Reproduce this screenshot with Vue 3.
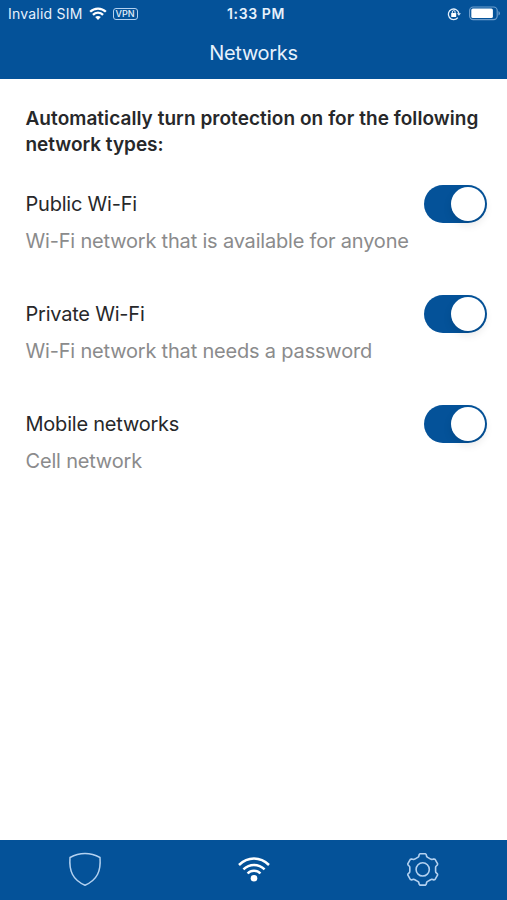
<script setup>
import { ref } from 'vue'

const networks = ref([
  { id: 'public', title: 'Public Wi-Fi', detail: 'Wi-Fi network that is available for anyone', on: true },
  { id: 'private', title: 'Private Wi-Fi', detail: 'Wi-Fi network that needs a password', on: true },
  { id: 'mobile', title: 'Mobile networks', detail: 'Cell network', on: true },
])

// Outline of a six-toothed cog: each tooth is given as (sideways, outward) offsets from the centre.
function cogPath(cx, cy) {
  const tooth = [[-5, 12], [-4, 12.8], [-3.5, 14.9], [-2.7, 15.7], [2.7, 15.7], [3.5, 14.9], [4, 12.8], [5, 12]]
  const points = []
  for (let i = 0; i < 6; i++) {
    const a = (i * Math.PI) / 3
    for (const [u, r] of tooth) {
      const x = cx + r * Math.sin(a) + u * Math.cos(a)
      const y = cy - r * Math.cos(a) + u * Math.sin(a)
      points.push(`${x.toFixed(2)} ${y.toFixed(2)}`)
    }
  }
  return `M${points.join('L')}Z`
}
const cog = cogPath(17.7, 17.4)
</script>

<template>
  <div class="screen">
    <header class="header">
      <div class="status">
        <div class="carrier">
          <span class="sim">Invalid SIM</span>
          <svg class="wifi-small" width="18" height="14" viewBox="0 0 32 25" fill="none" stroke="#fff" stroke-width="4.2">
            <path d="M2 8.5a20 20 0 0 1 28 0" />
            <path d="M7 14a12.5 12.5 0 0 1 18 0" />
            <path d="M11 18a7 7 0 0 1 10 0L16 23z" fill="#fff" stroke="none" />
          </svg>
          <span class="vpn">VPN</span>
        </div>
        <div class="clock">1:33 PM</div>
        <div class="indicators">
          <svg width="14" height="14" viewBox="0 0 14 14" fill="none" stroke="#e3effb">
            <path d="M10.8 10.6A5.3 5.3 0 1 1 11.9 6.6" stroke-width="1.3" />
            <path d="M9.9 6.2h4l-2 2.6z" fill="#e3effb" stroke="none" />
            <rect x="4.2" y="5.9" width="5" height="4" rx=".5" fill="#fff" stroke="none" />
            <path d="M5.3 6.5V5a1.4 1.4 0 0 1 2.8 0v1.5" stroke-width="1" />
          </svg>
          <svg width="32" height="15" viewBox="0 0 32 15">
            <rect x="0.6" y="1" width="27.6" height="12.6" rx="3.6" fill="none" stroke="#6f9fce" stroke-width="1.1" />
            <rect x="2.3" y="2.5" width="21.6" height="9.6" rx="1.6" fill="#fff" />
            <path d="M29.5 5q1.4.7 1.4 2.3t-1.4 2.3z" fill="#6f9fce" />
          </svg>
        </div>
      </div>
      <h1 class="title">Networks</h1>
    </header>

    <main class="content">
      <h2 class="intro"><span class="intro-first">Automatically turn protection on for the following</span><br><span class="intro-last">network types:</span></h2>
      <section v-for="network in networks" :key="network.id" class="network">
        <div class="row">
          <span class="name">{{ network.title }}</span>
          <button
            class="switch"
            :class="{ on: network.on }"
            role="switch"
            :aria-checked="network.on"
            @click="network.on = !network.on"
          >
            <span class="knob"></span>
          </button>
        </div>
        <p class="detail">{{ network.detail }}</p>
      </section>
    </main>

    <nav class="tabs">
      <div class="tab">
        <svg width="36" height="36" viewBox="0 0 36 36" fill="none" stroke="#b3d1f0" stroke-width="1.5" stroke-linejoin="round">
          <path d="M18 1.6C23.2 1.6 28.2 2.9 33 5.5C34 18.7 30.6 27.7 18 33.2C5.4 27.7 2 18.7 3 5.5C7.8 2.9 12.8 1.6 18 1.6Z" />
        </svg>
      </div>
      <div class="tab">
        <svg width="36" height="36" viewBox="0 0 36 36" fill="none" stroke="#fff" stroke-width="2.5">
          <path d="M3 13Q9.6 6.6 18 6.6T33 13" />
          <path d="M7.4 17.4Q12 13 18 13T28.6 17.4" />
          <path d="M11.6 21.5Q14.2 18.8 18 18.8T24.4 21.5" />
          <circle cx="18" cy="26.2" r="3.3" fill="#fff" stroke="none" />
        </svg>
      </div>
      <div class="tab">
        <svg width="36" height="36" viewBox="0 0 36 36" fill="none" stroke="#b3d1f0" stroke-width="1.6" stroke-linejoin="round">
          <path :d="cog" />
          <circle cx="17.7" cy="17.4" r="6.6" />
        </svg>
      </div>
    </nav>
  </div>
</template>

<style>
body {
  margin: 0;
  background: #fff;
}
</style>

<style scoped>
.screen {
  display: flex;
  flex-direction: column;
  width: 507px;
  height: 900px;
  background: #fff;
  color: #27282a;
  font-family: Inter, "Liberation Sans", sans-serif;
  overflow: hidden;
}

.header {
  box-sizing: border-box;
  height: 79px;
  flex: none;
  background: #045299;
  color: #e6f1fc;
}

.status {
  display: grid;
  grid-template-columns: 1fr auto 1fr;
  align-items: center;
  height: 27px;
  padding: 0 6px 0 8px;
}

.carrier {
  display: flex;
  align-items: center;
}

.sim {
  font-size: 14px;
  line-height: 27px;
  letter-spacing: 0.22px;
  white-space: nowrap;
}

.wifi-small {
  margin-left: 6px;
}

.vpn {
  box-sizing: border-box;
  width: 25px;
  height: 12px;
  margin-left: 6px;
  border: 1px solid #b3d1f0;
  border-radius: 3px;
  font-size: 9px;
  font-weight: 500;
  line-height: 10px;
  text-align: center;
}

.clock {
  padding-left: 3px;
  font-size: 14px;
  font-weight: 600;
  line-height: 27px;
  letter-spacing: 0.6px;
}

.indicators {
  display: flex;
  align-items: center;
  justify-content: flex-end;
  gap: 8px;
}

.title {
  margin: 11px 0 0;
  font-size: 20px;
  font-weight: 400;
  line-height: 30px;
  letter-spacing: -0.3px;
  text-align: center;
}

.content {
  flex: 1;
  padding: 27px 20.5px 0 25.5px;
}

.intro {
  margin: 0 0 26px;
  font-size: 19px;
  font-weight: 600;
  line-height: 26px;
  white-space: nowrap;
}

.intro-first {
  letter-spacing: 0.05px;
}

.intro-last {
  letter-spacing: -0.03px;
}

.network {
  height: 110px;
}

.row {
  display: flex;
  align-items: center;
  justify-content: space-between;
  height: 40px;
}

.name {
  font-size: 20px;
  letter-spacing: -0.22px;
}

.detail {
  margin: 3px 0 0;
  color: #8b8b8c;
  font-size: 20px;
  line-height: 28px;
  letter-spacing: -0.19px;
  white-space: nowrap;
}

.switch {
  display: flex;
  align-items: center;
  box-sizing: border-box;
  width: 63px;
  height: 38px;
  padding: 0 2px;
  border: 0;
  border-radius: 19px;
  background: #d5d5d8;
}

.switch.on {
  justify-content: flex-end;
  background: #045299;
}

.knob {
  width: 34px;
  height: 34px;
  border-radius: 50%;
  background: #fff;
  box-shadow: 0 4px 9px rgba(0, 0, 0, 0.1);
}

.tabs {
  display: grid;
  grid-template-columns: repeat(3, 1fr);
  height: 60px;
  flex: none;
  background: #045299;
}

.tab {
  display: flex;
  align-items: center;
  justify-content: center;
}
</style>
